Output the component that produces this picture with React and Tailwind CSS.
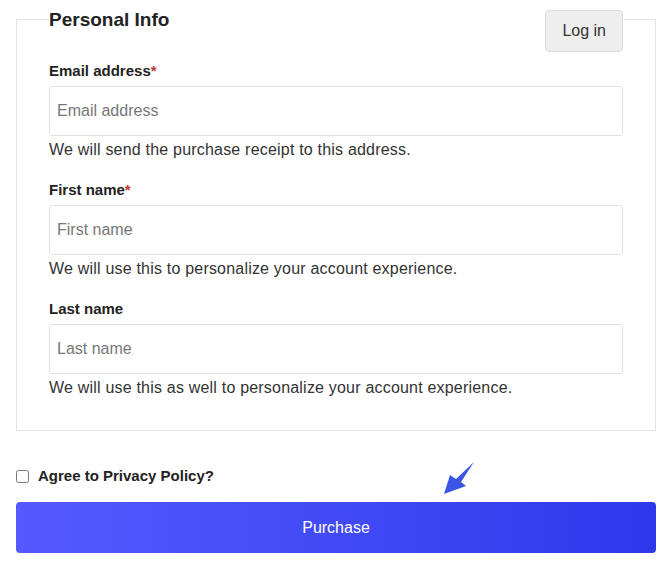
const fields = [
  { label: "Email address", required: true, placeholder: "Email address", help: "We will send the purchase receipt to this address." },
  { label: "First name", required: true, placeholder: "First name", help: "We will use this to personalize your account experience." },
  { label: "Last name", required: false, placeholder: "Last name", help: "We will use this as well to personalize your account experience." },
];

const App = () => {
  return (
    <div className="bg-white min-h-[571px] pl-4 pr-[13px] text-[#222] font-['Liberation_Sans',Arial,sans-serif]">
      <fieldset className="border border-[#e5e5e5] px-8 pb-[32px]">
        <legend className="w-full h-[38px] flex justify-between items-start">
          <h3 className="text-[19px] leading-[40px] font-bold text-[#222]">Personal Info</h3>
          <button className="mt-[10px] h-[42px] px-4 bg-[#eeeeee] border border-[#dddddd] rounded text-[16px] text-[#333]">
            Log in
          </button>
        </legend>

        <div className="flex flex-col gap-[20px] pt-[23px]">
          {fields.map((f) => (
            <div key={f.label} className="flex flex-col">
              <label className="text-[15px] leading-5 font-bold mb-[5px]">
                {f.label}
                {f.required && <span className="text-[#c0392b]">*</span>}
              </label>
              <input
                placeholder={f.placeholder}
                className="h-[50px] w-full border border-[#e2e2e2] rounded-[3px] px-[7px] text-[16px] placeholder:text-[#777] outline-none"
              />
              <p className="text-[16px] leading-5 mt-[4px] tracking-[0.2px] text-[#333]">{f.help}</p>
            </div>
          ))}
        </div>
      </fieldset>

      <label className="flex items-center gap-[9px] mt-[35px] h-5 text-[15px] font-bold">
        <input type="checkbox" className="w-[13px] h-[13px] m-0" />
        Agree to Privacy Policy?
      </label>

      <div className="relative mt-[16px]">
        <svg width="34" height="36" viewBox="0 0 34 36" className="absolute left-[426px] -top-[42px]">
          <polygon points="32,2 19,22 24,26 2,34 8,15 14,19" fill="#3b55e6" />
        </svg>
        <button className="w-full h-[51px] rounded bg-gradient-to-r from-[#5659ff] to-[#2f37ec] text-white text-[16px]">
          Purchase
        </button>
      </div>
    </div>
  );
};

export default App;
